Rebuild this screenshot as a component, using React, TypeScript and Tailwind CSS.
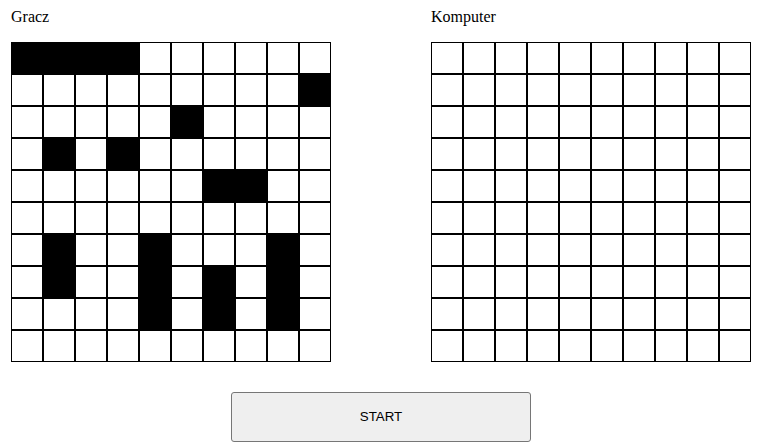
import React from "react";

const BLACK: Set<string> = new Set([
  "0-0", "0-1", "0-2", "0-3",
  "1-9",
  "2-5",
  "3-1", "3-3",
  "4-6", "4-7",
  "6-1", "7-1",
  "6-4", "7-4", "8-4",
  "7-6", "8-6",
  "6-8", "7-8", "8-8",
]);

function Board({ title, ships }: { title: string; ships: boolean }) {
  const cells = [];
  for (let r = 0; r < 10; r++) {
    for (let c = 0; c < 10; c++) {
      const filled = ships && BLACK.has(`${r}-${c}`);
      cells.push(
        <div
          key={`${r}-${c}`}
          className={`w-[32px] h-[32px] border border-black ${filled ? "bg-black" : "bg-white"}`}
        />
      );
    }
  }
  return (
    <div className="flex flex-col">
      <div className="text-[16px] leading-[18px] text-black" style={{ fontFamily: '"Liberation Serif", "Times New Roman", serif' }}>
        {title}
      </div>
      <div className="mt-[16px] grid grid-cols-[repeat(10,32px)]">{cells}</div>
    </div>
  );
}

export default function App() {
  return (
    <div className="w-[764px] h-[444px] bg-white pl-[11px] pt-[8px]">
      <div className="flex flex-col items-center w-fit">
        <div className="flex gap-[100px]">
          <Board title="Gracz" ships={true} />
          <Board title="Komputer" ships={false} />
        </div>
        <button
          className="mt-[30px] w-[300px] h-[50px] bg-[#efefef] border border-[#767676] rounded-[3px] text-[13.33px] text-black"
          style={{ fontFamily: '"Liberation Sans", Arial, sans-serif' }}
        >
          START
        </button>
      </div>
    </div>
  );
}
